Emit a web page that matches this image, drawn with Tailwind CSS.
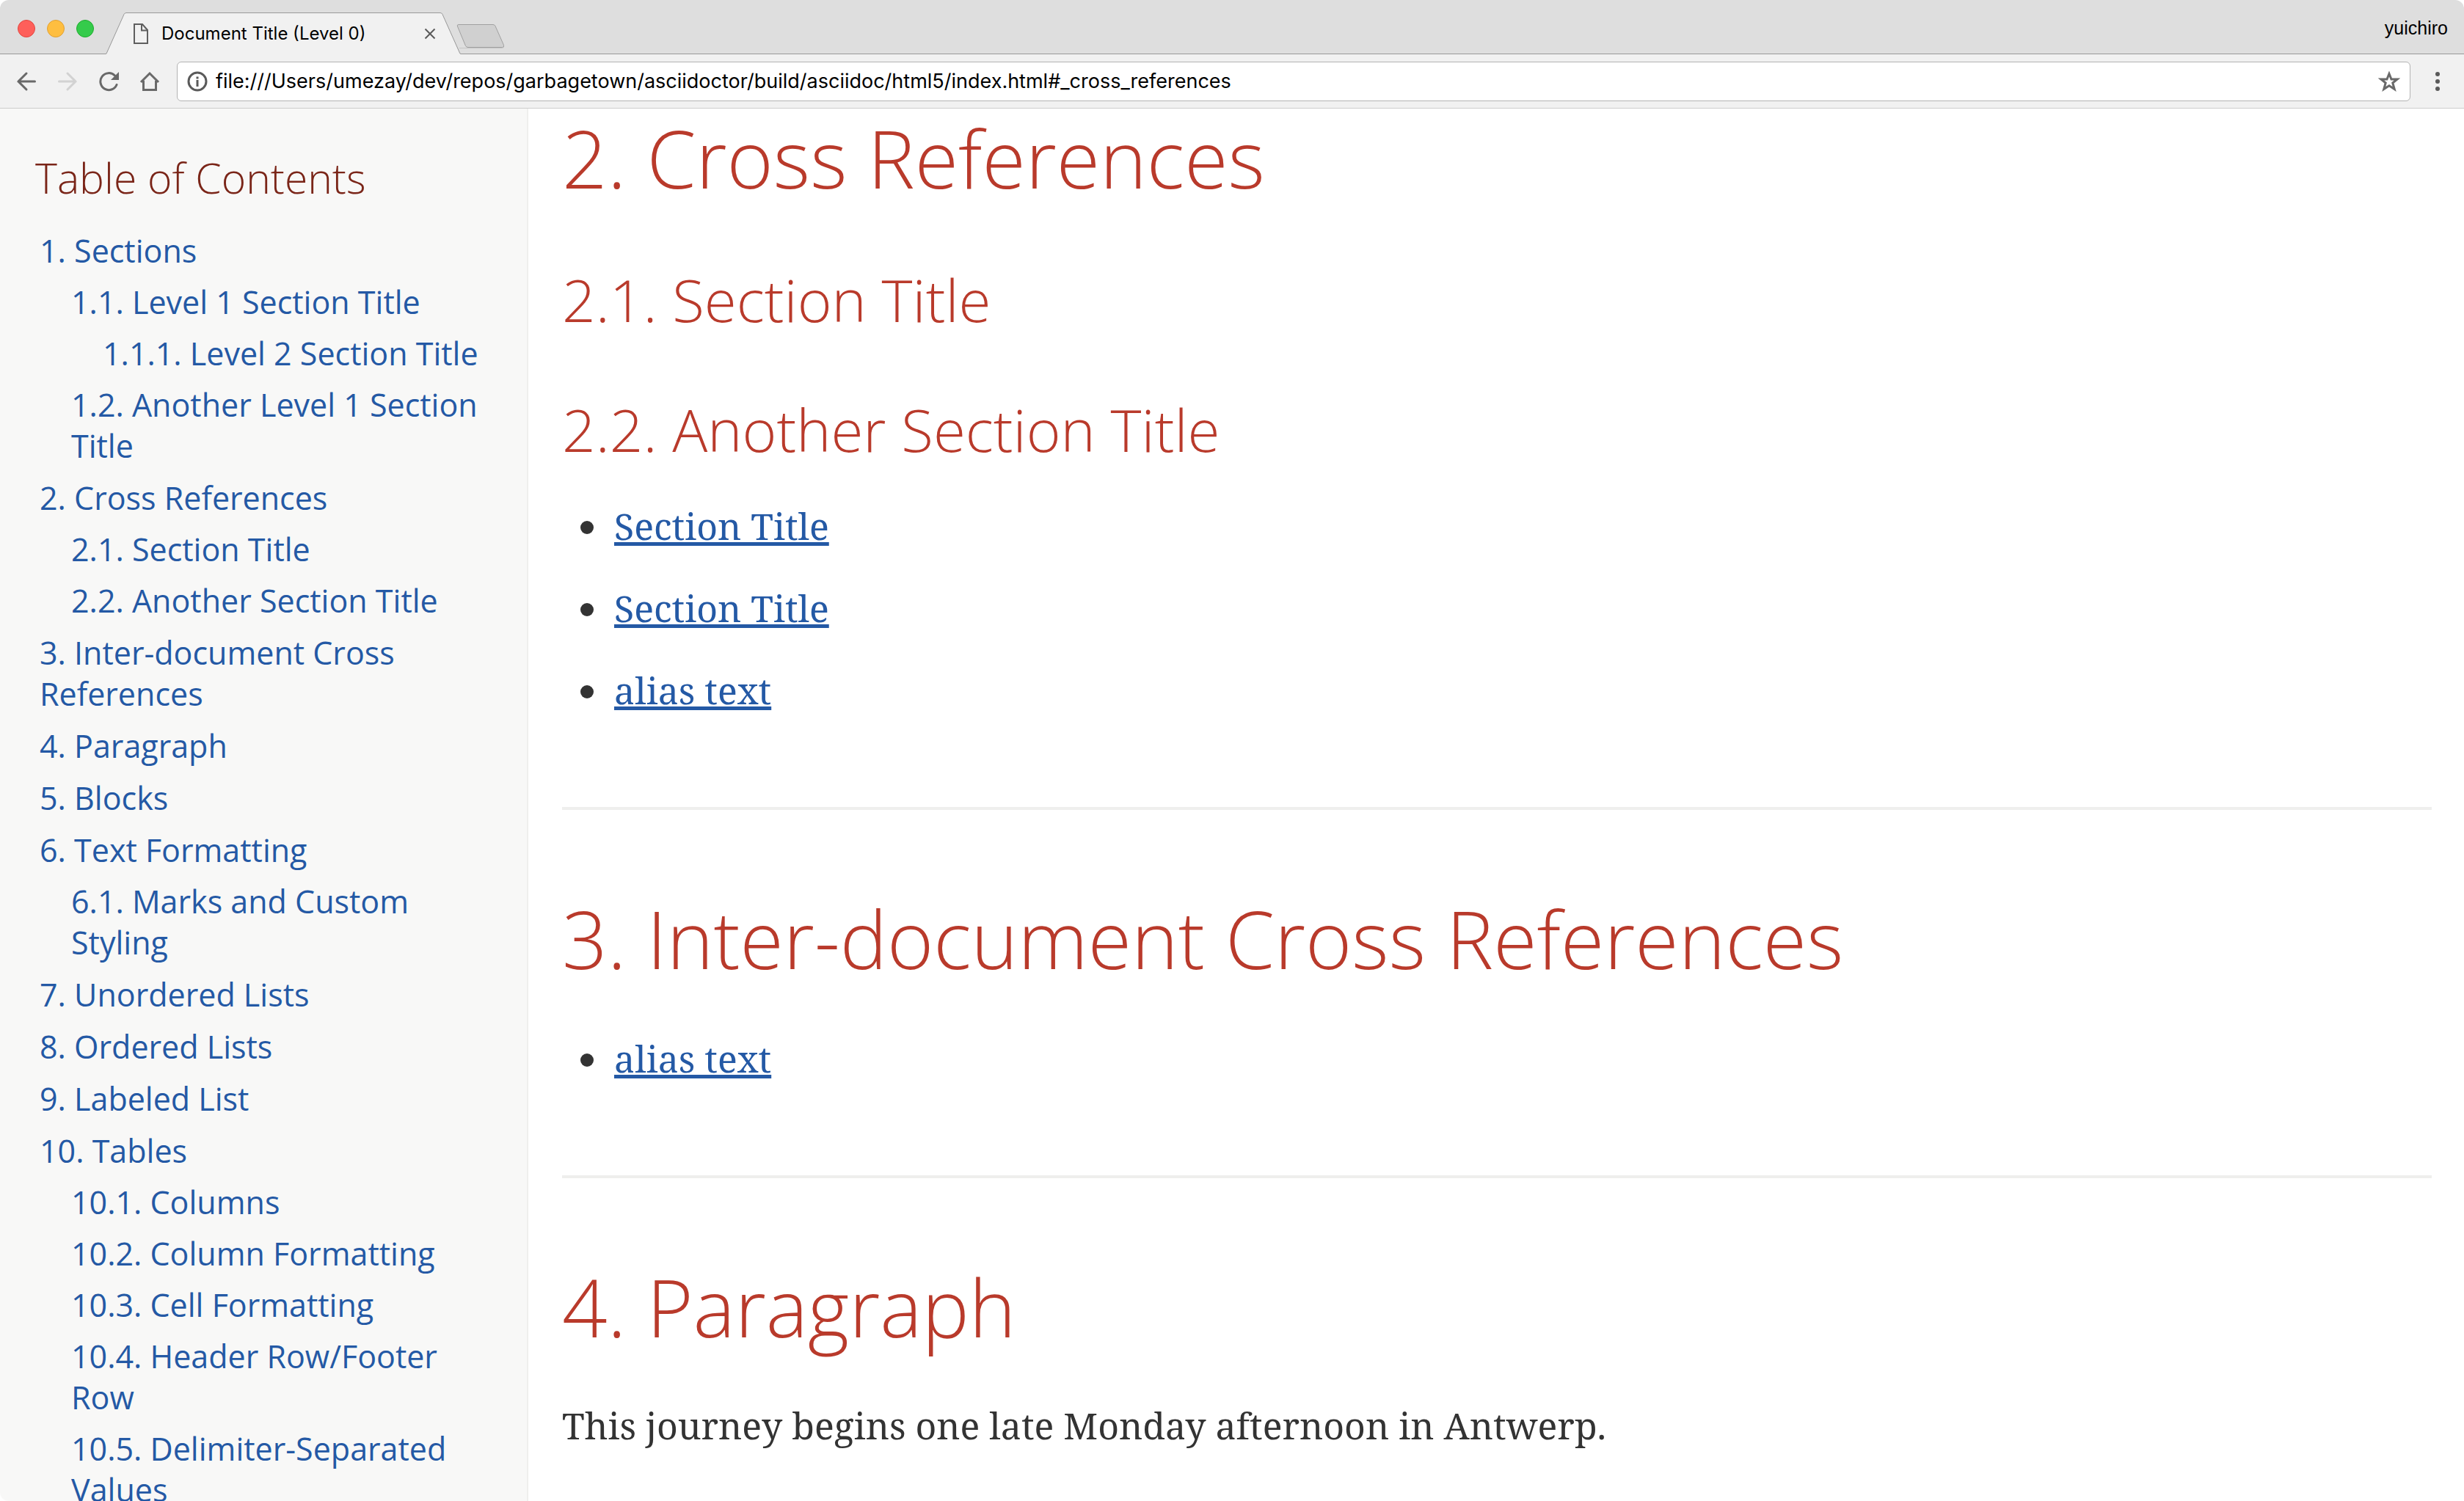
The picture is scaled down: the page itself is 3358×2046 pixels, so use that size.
<!DOCTYPE html>
<html lang="en">
<head>
<meta charset="utf-8">
<title>Document Title (Level 0)</title>
<script src="https://cdn.jsdelivr.net/npm/@tailwindcss/browser@4"></script>
</head>
<body class="bg-white">
<div class="flex h-screen flex-col overflow-hidden rounded-xl bg-white">

  <!-- Tab strip -->
  <header class="flex h-[74px] shrink-0 items-end bg-[#dedede] shadow-[inset_0_-1px_0_#999]">
    <div class="flex h-full items-center gap-4 pr-4 pl-6 pb-px pt-1">
      <button aria-label="Close window" class="size-6 rounded-full border border-[#e2463f] bg-[#fe5f5a]"></button>
      <button aria-label="Minimize window" class="size-6 rounded-full border border-[#e0a033] bg-[#febe40]"></button>
      <button aria-label="Zoom window" class="size-6 rounded-full border border-[#1dac2c] bg-[#35cb4b]"></button>
    </div>
    <div class="relative h-[57px] w-[484px]">
      <svg class="absolute inset-0" width="484" height="57" viewBox="0 0 484 57" fill="none" aria-hidden="true">
        <path d="M0 57V56.500L1.500 56L25 2.500Q26 .5 28 .5H456Q458 .5 459 2.500L482.500 56L484 56.500V57Z" fill="#f1f1f1"/>
        <path d="M0 56.500Q1 56.500 1.500 55L25 2.500Q26 .5 28 .5H456Q458 .5 459 2.500L482.500 55Q483 56.500 484 56.500" stroke="#999"/>
      </svg>
      <div class="relative flex h-full items-center pr-[34px] pl-[38px]">
        <svg width="20" height="28" viewBox="0 0 20 28" fill="none" stroke="#5f5f5f" stroke-width="2" aria-hidden="true"><path d="M1 1H12L19 9V27H1Z"/><path d="M11 1V9.500H19"/></svg>
        <span class="ml-[18px] flex-1 font-[Inter,sans-serif] text-2xl text-black">Document Title (Level 0)</span>
        <button aria-label="Close tab"><svg width="16" height="16" viewBox="0 0 16 16" stroke="#5a5a5a" stroke-width="2"><path d="M1.500 1.500L14.500 14.500M14.500 1.500L1.500 14.500"/></svg></button>
      </div>
    </div>
    <button aria-label="New tab" class="-ml-[7px] pb-2">
      <svg width="68" height="33" viewBox="0 0 68 33" fill="none"><path d="M5 32.500H62Q66.500 32.500 65 29.500" stroke="#c4c4c4"/><path d="M4 .5H51Q53 .5 54 2.500L65.500 28.500Q66.500 31.500 63.500 31.500H17Q14.500 31.500 13.500 29.500L2.500 3Q1.500 .5 4 .5Z" fill="#d0d0d0" stroke="#a0a0a0"/></svg>
    </button>
    <button class="ml-auto self-center pt-1 pr-[22px] font-['Liberation_Sans',sans-serif] text-[25px] text-black">yuichiro</button>
  </header>

  <!-- Toolbar -->
  <div class="flex h-[74px] shrink-0 items-center border-b border-[#ccc] bg-[#f1f1f1] px-[22px]">
    <nav class="flex items-center gap-7">
      <button aria-label="Back"><svg width="28" height="28" viewBox="0 0 28 28" fill="none" stroke="#696969" stroke-width="3" stroke-linecap="round"><path d="M3 14H25.500M14 3L3 14L14 25"/></svg></button>
      <button aria-label="Forward"><svg width="28" height="28" viewBox="0 0 28 28" fill="none" stroke="#d2d2d2" stroke-width="3" stroke-linecap="round"><path d="M2.500 14H25M14 3L25 14L14 25"/></svg></button>
      <button aria-label="Reload"><svg width="28" height="28" viewBox="0 0 28 28" fill="none"><path d="M22.500 6A11.500 11.500 0 1 0 25 18.500" stroke="#696969" stroke-width="3" stroke-linecap="round"/><path d="M28 1V12H17Z" fill="#696969"/></svg></button>
      <button aria-label="Home"><svg width="28" height="28" viewBox="0 0 28 28" fill="none" stroke="#696969" stroke-width="3"><path d="M2 15L14 3L26 15"/><path d="M5.500 13V25.500H22.500V13"/></svg></button>
    </nav>
    <div class="mr-[23px] ml-[23px] flex h-[54px] flex-1 items-center gap-[11px] rounded-md border border-[#b3b3b3] bg-white px-[13px]">
      <svg width="28" height="28" viewBox="0 0 28 28" fill="none" stroke="#5a5a5a" aria-hidden="true"><circle cx="14" cy="14" r="12" stroke-width="3"/><path d="M14 12V21M14 7.500V10.500" stroke-width="3"/></svg>
      <input aria-label="Address" class="min-w-0 flex-1 bg-transparent pt-0.5 font-[Inter,sans-serif] text-[27px] text-black outline-none" value="file:///Users/umezay/dev/repos/garbagetown/asciidoctor/build/asciidoc/html5/index.html#_cross_references">
      <button aria-label="Bookmark this page"><svg width="30" height="30" viewBox="0 0 30 30" fill="none" stroke="#696969" stroke-width="3"><path d="M15 4.500L18 12H26L19.800 17L22.200 25.500L15 20.700L7.800 25.500L10.200 17L4 12H12Z"/></svg></button>
    </div>
    <button aria-label="Menu"><svg width="28" height="28" viewBox="0 0 28 28" fill="#5a5a5a"><circle cx="14" cy="4" r="3"/><circle cx="14" cy="14" r="3"/><circle cx="14" cy="24" r="3"/></svg></button>
  </div>

  <!-- Page -->
  <div class="flex min-h-0 flex-1">
    <aside class="w-[720px] shrink-0 border-r-2 border-[#efefed] bg-[#f8f8f7] px-12 pt-[60px] font-['Open_Sans',sans-serif]">
      <h2 class="text-[57px] leading-[68px] font-light text-[#7a2518]">Table of Contents</h2>
      <ul class="mt-[38px] flex flex-col gap-[15px] pl-[6px] text-[43px] leading-[56px] text-[#2459a5]">
        <li><a href="#_sections">1. Sections</a>
          <ul class="mt-3.5 flex flex-col gap-3.5 pl-[43px]">
            <li><a href="#_level_1">1.1. Level 1 Section Title</a>
              <ul class="mt-3.5 pl-[43px]"><li><a href="#_level_2">1.1.1. Level 2 Section Title</a></li></ul>
            </li>
            <li><a href="#_another_level_1">1.2. Another Level 1 Section Title</a></li>
          </ul>
        </li>
        <li><a href="#_cross_references">2. Cross References</a>
          <ul class="mt-3.5 flex flex-col gap-3.5 pl-[43px]">
            <li><a href="#_section_title">2.1. Section Title</a></li>
            <li><a href="#_another_section_title">2.2. Another Section Title</a></li>
          </ul>
        </li>
        <li><a href="#_inter_document">3. Inter-document Cross References</a></li>
        <li><a href="#_paragraph">4. Paragraph</a></li>
        <li><a href="#_blocks">5. Blocks</a></li>
        <li><a href="#_text_formatting">6. Text Formatting</a>
          <ul class="mt-3.5 pl-[43px]"><li><a href="#_marks">6.1. Marks and Custom Styling</a></li></ul>
        </li>
        <li><a href="#_unordered_lists">7. Unordered Lists</a></li>
        <li><a href="#_ordered_lists">8. Ordered Lists</a></li>
        <li><a href="#_labeled_list">9. Labeled List</a></li>
        <li><a href="#_tables">10. Tables</a>
          <ul class="mt-3.5 flex flex-col gap-3.5 pl-[43px]">
            <li><a href="#_columns">10.1. Columns</a></li>
            <li><a href="#_column_formatting">10.2. Column Formatting</a></li>
            <li><a href="#_cell_formatting">10.3. Cell Formatting</a></li>
            <li><a href="#_header_row">10.4. Header Row/Footer Row</a></li>
            <li><a href="#_delimiter">10.5. Delimiter-Separated Values</a></li>
          </ul>
        </li>
      </ul>
    </aside>

    <main class="min-w-0 flex-1 pt-0.5 pr-11 pl-[46px] font-['Noto_Serif',serif] text-[50px] leading-[80px] text-[#333]">
      <section>
        <h2 class="font-['Open_Sans',sans-serif] text-[108px] leading-[132px] font-light text-[#b93a2b]">2. Cross References</h2>
        <h3 class="mt-[78px] font-['Open_Sans',sans-serif] text-[80px] leading-[96px] font-light text-[#b93a2b]">2.1. Section Title</h3>
        <h3 class="mt-[81px] font-['Open_Sans',sans-serif] text-[80px] leading-[96px] font-light text-[#b93a2b]">2.2. Another Section Title</h3>
        <ul class="mt-11 flex list-disc flex-col gap-8 pl-[67px]">
          <li class="pl-1"><a href="#_section_title" class="text-[#2459a5] underline">Section Title</a></li>
          <li class="pl-1"><a href="#_section_title" class="text-[#2459a5] underline">Section Title</a></li>
          <li class="pl-1"><a href="#_section_title" class="text-[#2459a5] underline">alias text</a></li>
        </ul>
      </section>
      <section class="mt-[119px] border-t-4 border-[#efefed] pt-[110px]">
        <h2 class="font-['Open_Sans',sans-serif] text-[108px] leading-[132px] font-light text-[#b93a2b]">3. Inter-document Cross References</h2>
        <ul class="mt-[57px] flex list-disc flex-col gap-8 pl-[67px]">
          <li class="pl-1"><a href="#_paragraph" class="text-[#2459a5] underline">alias text</a></li>
        </ul>
      </section>
      <section class="mt-[119px] border-t-4 border-[#efefed] pt-[110px]">
        <h2 class="font-['Open_Sans',sans-serif] text-[108px] leading-[132px] font-light text-[#b93a2b]">4. Paragraph</h2>
        <p class="mt-[55px]">This journey begins one late Monday afternoon in Antwerp.</p>
      </section>
    </main>
  </div>
</div>
</body>
</html>
